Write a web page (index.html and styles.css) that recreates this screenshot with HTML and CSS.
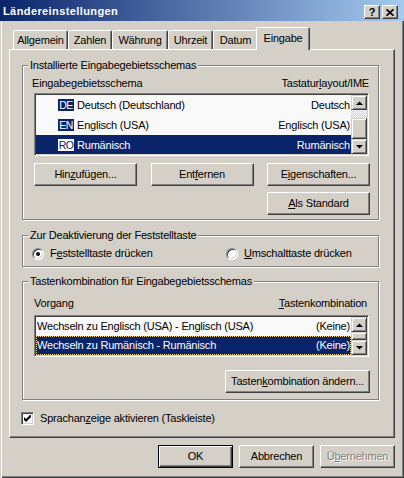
FILE: index.html
```html
<!DOCTYPE html>
<html lang="de">
<head>
<meta charset="utf-8">
<title>Ländereinstellungen</title>
<link rel="stylesheet" href="styles.css">
</head>
<body>
<div class="window">
  <div class="titlebar">
    <span class="title">Ländereinstellungen</span>
    <div class="tbtns">
      <span class="tbtn help">?</span>
      <span class="tbtn close"><svg width="8" height="7" viewBox="0 0 8 7"><path d="M0.5 0.3 L7.5 6.7 M7.5 0.3 L0.5 6.7" stroke="#000" stroke-width="1.7" fill="none"/></svg></span>
    </div>
  </div>
  <div class="client">
    <div class="tabs">
      <div class="tab t1">Allgemein</div>
      <div class="tab t2">Zahlen</div>
      <div class="tab t3">Währung</div>
      <div class="tab t4">Uhrzeit</div>
      <div class="tab t5">Datum</div>
      <div class="tab sel">Eingabe</div>
    </div>
    <div class="panel">
      <div class="group g1">
        <div class="gtitle">Installierte Eingabegebietsschemas</div>
        <div class="lhead h1"><span>Eingabegebietsschema</span><span>Tastatur<u>l</u>ayout/IME</span></div>
        <div class="list l1">
          <div class="rows">
            <div class="row"><span class="lang">DE</span><span class="name">Deutsch (Deutschland)</span><span class="kb">Deutsch</span></div>
            <div class="row"><span class="lang">EN</span><span class="name">Englisch (USA)</span><span class="kb">Englisch (USA)</span></div>
            <div class="row sel"><span class="lang">RO</span><span class="name">Rumänisch</span><span class="kb">Rumänisch</span></div>
          </div>
          <div class="sb">
            <div class="sbtn"><svg width="7" height="4" viewBox="0 0 7 4"><polygon points="0,4 3.5,0.5 7,4" fill="#000"/></svg></div>
            <div class="track t8"></div>
            <div class="thumb th21"></div>
            <div class="sbtn"><svg width="7" height="4" viewBox="0 0 7 4"><polygon points="0,0 7,0 3.5,3.5" fill="#000"/></svg></div>
          </div>
        </div>
        <div class="btnrow">
          <div class="btn w103">Hin<u>z</u>ufügen...</div>
          <div class="btn w103">Ent<u>f</u>ernen</div>
          <div class="btn w103">E<u>i</u>genschaften...</div>
        </div>
        <div class="btnrow right r2">
          <div class="btn w103"><u>A</u>ls Standard</div>
        </div>
      </div>

      <div class="group g2">
        <div class="gtitle">Zur Deaktivierung der Feststelltaste</div>
        <div class="radios">
          <div class="ropt first"><span class="radio"><span class="dot"></span></span><span>F<u>e</u>ststelltaste drücken</span></div>
          <div class="ropt"><span class="radio"></span><span><u>U</u>mschalttaste drücken</span></div>
        </div>
      </div>

      <div class="group g3">
        <div class="gtitle">Tastenkombination für Eingabegebietsschemas</div>
        <div class="lhead h3"><span>Vorgang</span><span><u>T</u>astenkombination</span></div>
        <div class="list l2">
          <div class="rows">
            <div class="row"><span>Wechseln zu Englisch (USA) - Englisch (USA)</span><span>(Keine)</span></div>
            <div class="row sel focus"><span>Wechseln zu Rumänisch - Rumänisch</span><span>(Keine)</span></div>
          </div>
          <div class="sb">
            <div class="sbtn"><svg width="7" height="4" viewBox="0 0 7 4"><polygon points="0,4 3.5,0.5 7,4" fill="#000"/></svg></div>
            <div class="thumb th8"></div>
            <div class="sbtn"><svg width="7" height="4" viewBox="0 0 7 4"><polygon points="0,0 7,0 3.5,3.5" fill="#000"/></svg></div>
          </div>
        </div>
        <div class="btnrow right r3">
          <div class="btn w145">Tasten<u>k</u>ombination ändern...</div>
        </div>
      </div>

      <div class="chkrow">
        <span class="chk"><svg width="7" height="7" viewBox="0 0 7 7"><polygon points="0,2 2,4 7,-1 7,2 2,7 0,5" fill="#000"/></svg></span>
        <span>Sprachan<u>z</u>eige aktivieren (Taskleiste)</span>
      </div>
    </div>
    <div class="dlgbtns">
      <div class="btn w75 default">OK</div>
      <div class="btn w75">Abbrechen</div>
      <div class="btn w75 dis">Ü<u>b</u>ernehmen</div>
    </div>
  </div>
</div>
</body>
</html>
```

FILE: styles.css
```css
* { box-sizing: border-box; }
html, body { margin: 0; padding: 0; }
body {
  width: 404px;
  height: 478px;
  overflow: hidden;
  background: #d4d0c8;
  font-family: "Liberation Sans", Arial, sans-serif;
  font-size: 11px;
  line-height: 13px;
  letter-spacing: -0.2px;
  color: #000;
}
u { text-underline-offset: 1px; }

.window {
  width: 404px;
  height: 478px;
  display: flex;
  flex-direction: column;
  box-shadow: inset 1px 0 #d4d0c8, inset 2px 0 #fff, inset -1px -1px #404040, inset -2px -2px #808080;
}

.titlebar {
  flex: none;
  height: 21px;
  display: flex;
  justify-content: space-between;
  align-items: flex-start;
  padding: 0 6px 0 3px;
  background: linear-gradient(to right, #0a246a, #a6caf0);
}
.title {
  color: #fff;
  font-weight: bold;
  letter-spacing: 0.4px;
  margin-top: 5px;
}
.tbtns { display: flex; gap: 2px; margin-top: 5px; }
.tbtn {
  width: 16px;
  height: 14px;
  display: flex;
  align-items: center;
  justify-content: center;
  background: #d4d0c8;
  border: 1px solid;
  border-color: #fff #404040 #404040 #fff;
  box-shadow: inset -1px -1px #808080;
  font-weight: bold;
  letter-spacing: 0;
  line-height: 12px;
}
.tbtn svg { display: block; }

.client {
  flex: 1;
  display: flex;
  flex-direction: column;
  padding: 6px 9px 0 9px;
}

.tabs {
  height: 22px;
  display: flex;
  align-items: flex-end;
  padding-left: 4px;
  position: relative;
  z-index: 1;
}
.tab {
  height: 19px;
  padding-top: 3px;
  text-align: center;
  background: #d4d0c8;
  border: 1px solid;
  border-bottom: none;
  border-color: #fff #404040 transparent #fff;
  border-radius: 2px 2px 0 0;
  box-shadow: inset -1px 0 #808080;
}
.t1 { width: 55px; }
.t2 { width: 44px; }
.t3 { width: 56px; }
.t4 { width: 45px; }
.t5 { width: 45px; }
.tab.sel {
  width: 54px;
  height: 23px;
  padding-top: 4px;
  margin: 0 -2px -1px -2px;
}

.panel {
  height: 389px;
  display: flex;
  flex-direction: column;
  align-items: flex-start;
  padding-left: 12px;
  border: 1px solid;
  border-color: #fff #404040 #404040 #fff;
  box-shadow: inset -1px -1px #808080;
}

.group {
  width: 357px;
  border: 1px solid #808080;
  box-shadow: inset 1px 1px #fff, 1px 1px #fff;
  padding: 0 8px 0 11px;
}
.gtitle {
  width: max-content;
  margin: -7px 0 0 -6px;
  padding: 0 2px;
  background: #d4d0c8;
}
.g1 { margin-top: 15px; padding-bottom: 4px; }
.g2 { margin-top: 15px; padding-bottom: 6px; }
.g3 { margin-top: 14px; padding-bottom: 6px; }

.lhead { display: flex; justify-content: space-between; }
.h1 { margin-top: 5px; margin-left: -2px; padding-right: 1px; }
.h3 { margin-top: 9px; padding-right: 3px; }

.list {
  display: flex;
  width: 335px;
  padding: 1px;
  border: 1px solid;
  border-color: #808080 #fff #fff #808080;
  box-shadow: inset 1px 1px #404040, inset -1px -1px #d4d0c8;
  background: #fff;
}
.l1 { height: 63px; margin-top: 3px; }
.l2 { height: 42px; margin-top: 5px; }
.rows { flex: 1; overflow: hidden; background: #f9f9f9; }
.row { display: flex; align-items: center; white-space: nowrap; }
.l1 .row { height: 20px; padding: 0 1px 0 22px; }
.l2 .row { height: 19px; padding: 0 1px 0 1px; justify-content: space-between; }
.lang {
  width: 16px;
  height: 12px;
  margin-right: 3px;
  display: flex;
  justify-content: center;
  line-height: 12px;
  font-size: 10.5px;
  letter-spacing: -0.6px;
  overflow: visible;
  background: #0a246a;
  color: #fff;
}
.name { flex: 1; }
.row.sel { background: #0a246a; color: #fff; }
.row.sel .lang { background: #fff; color: #0a246a; }
.row.focus { outline: 1px dotted #f5db95; outline-offset: -1px; }

.sb { width: 16px; flex: none; display: flex; flex-direction: column; }
.sbtn, .thumb {
  flex: none;
  display: flex;
  align-items: center;
  justify-content: center;
  background: #d4d0c8;
  border: 1px solid;
  border-color: #d4d0c8 #404040 #404040 #d4d0c8;
  box-shadow: inset 1px 1px #fff, inset -1px -1px #808080;
}
.sbtn { height: 15px; }
.sbtn svg { display: block; }
.th21 { height: 21px; }
.th8 { height: 8px; }
.track {
  flex: none;
  background: repeating-conic-gradient(#fff 0 25%, #d4d0c8 0 50%) 0 0 / 2px 2px;
}
.t8 { height: 8px; }

.btnrow { display: flex; justify-content: space-between; margin-top: 7px; }
.btnrow.right { justify-content: flex-end; }
.r2 { margin-top: 6px; }
.r3 { margin-top: 13px; }
.btn {
  height: 23px;
  display: flex;
  align-items: center;
  justify-content: center;
  white-space: nowrap;
  background: #d4d0c8;
  border: 1px solid;
  border-color: #fff #404040 #404040 #fff;
  box-shadow: inset -1px -1px #808080;
}
.w103 { width: 103px; }
.w145 { width: 145px; }
.w75 { width: 75px; }
.btn.default {
  border-color: #000;
  box-shadow: inset 1px 1px #fff, inset -1px -1px #404040, inset -2px -2px #808080;
}
.btn.dis { color: #808080; text-shadow: 1px 1px #fff; }

.radios { display: flex; margin-top: 5px; margin-left: -2px; }
.ropt { display: flex; align-items: center; gap: 6px; }
.ropt.first { width: 194px; }
.radio {
  width: 12px;
  height: 12px;
  display: flex;
  align-items: center;
  justify-content: center;
  border-radius: 50%;
  background: #fff;
  border: 1px solid;
  border-color: #808080 #fff #fff #808080;
  box-shadow: inset 1px 1px #404040, inset -1px -1px #d4d0c8;
}
.dot { width: 4px; height: 4px; border-radius: 50%; background: #000; }

.chkrow { display: flex; align-items: center; gap: 6px; margin-top: 12px; margin-left: -1px; }
.chk {
  width: 13px;
  height: 13px;
  display: flex;
  align-items: center;
  justify-content: center;
  background: #fff;
  border: 1px solid;
  border-color: #808080 #fff #fff #808080;
  box-shadow: inset 1px 1px #404040, inset -1px -1px #d4d0c8;
}
.chk svg { display: block; }

.dlgbtns { display: flex; justify-content: flex-end; gap: 6px; margin-top: 7px; }
```
